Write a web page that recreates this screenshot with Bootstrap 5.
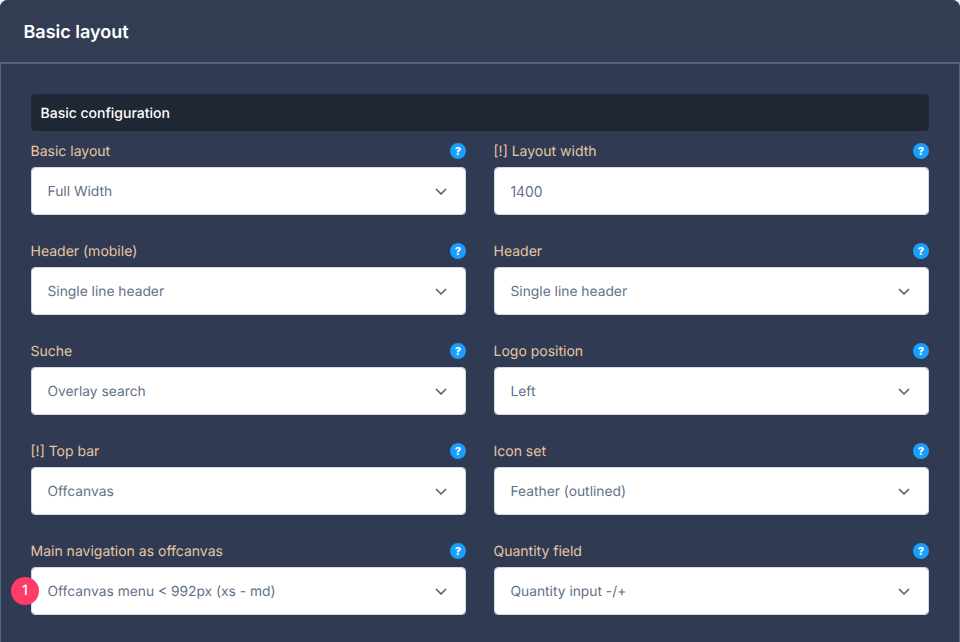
<!DOCTYPE html>
<html lang="en">
<head>
<meta charset="utf-8">
<title>Basic layout</title>
<link href="https://cdn.jsdelivr.net/npm/bootstrap@5.3.0/dist/css/bootstrap.min.css" rel="stylesheet">
<style>
html,body{height:100%;overflow:hidden}
body{background:#f0f2f5;font-family:Inter,"Liberation Sans",sans-serif;font-size:14px;text-rendering:geometricPrecision}
.cfg-card{background:#303b53;border:0;border-radius:8px 8px 0 0;height:642px;color:#fff}
.cfg-head{height:64px;padding:4px 24px 0 23.5px;background:#323d54;border-bottom:2px solid #4f657b;border-radius:8px 8px 0 0;display:flex;align-items:center}
.cfg-head h1{font-size:18px;font-weight:600;margin:0;color:#fff;line-height:1}
.cfg-body{padding:30px 30px 0;border-left:1px solid #4f657b;border-right:1px solid #4f657b;height:578px}
.cfg-section{background:#1f2634;height:37px;border-radius:4px;padding:1px 9.5px 0;display:flex;align-items:center;font-size:14px;font-weight:500;color:#fff;margin-bottom:11px}
.cfg-grid{--bs-gutter-x:28px;--bs-gutter-y:0}
.cfg-field{height:100px}
.cfg-top{height:25px;display:flex;justify-content:space-between;align-items:flex-start}
.cfg-label{color:#e6c6a2;font-size:14px;line-height:18px;margin:1px 0 0 -.5px}
.cfg-help{width:16px;height:16px;border-radius:50%;background:#189eff;color:#fff;font-size:11px;font-weight:800;line-height:16px;text-align:center;margin-top:1px}
.cfg-input{height:48px;border:1px solid #d1d9e0;border-radius:4px;padding:2px 16px 0;font-size:13.8px;color:#5f7287;background-color:#fff;box-shadow:none;text-indent:-.5px}
.cfg-select{position:relative}
.cfg-select .cfg-input{display:flex;align-items:center}
.cfg-caret{position:absolute;right:19px;top:21px;width:12px;height:8px}
.cfg-pin{position:absolute;left:-20px;top:10px;width:28px;height:28px;border-radius:50%;background:#ff3d68;color:#fff;font-size:14px;font-weight:500;line-height:28px;text-align:center}
</style>
</head>
<body>
<div class="card cfg-card">
  <div class="cfg-head"><h1>Basic layout</h1></div>
  <div class="cfg-body">
    <div class="cfg-section">Basic configuration</div>
    <div class="row cfg-grid">
      <div class="col-6 cfg-field"><div class="cfg-top"><label class="cfg-label">Basic layout</label><span class="cfg-help">?</span></div>
        <div class="cfg-select"><div class="form-control cfg-input">Full Width</div><svg class="cfg-caret" viewBox="0 0 12 8"><path d="M1.5 1.5 6 6l4.5-4.5" fill="none" stroke="#52667a" stroke-width="1.7" stroke-linecap="round" stroke-linejoin="round"/></svg></div></div>
      <div class="col-6 cfg-field"><div class="cfg-top"><label class="cfg-label">[!] Layout width</label><span class="cfg-help">?</span></div>
        <input class="form-control cfg-input" value="1400"></div>

      <div class="col-6 cfg-field"><div class="cfg-top"><label class="cfg-label">Header (mobile)</label><span class="cfg-help">?</span></div>
        <div class="cfg-select"><div class="form-control cfg-input">Single line header</div><svg class="cfg-caret" viewBox="0 0 12 8"><path d="M1.5 1.5 6 6l4.5-4.5" fill="none" stroke="#52667a" stroke-width="1.7" stroke-linecap="round" stroke-linejoin="round"/></svg></div></div>
      <div class="col-6 cfg-field"><div class="cfg-top"><label class="cfg-label">Header</label><span class="cfg-help">?</span></div>
        <div class="cfg-select"><div class="form-control cfg-input">Single line header</div><svg class="cfg-caret" viewBox="0 0 12 8"><path d="M1.5 1.5 6 6l4.5-4.5" fill="none" stroke="#52667a" stroke-width="1.7" stroke-linecap="round" stroke-linejoin="round"/></svg></div></div>

      <div class="col-6 cfg-field"><div class="cfg-top"><label class="cfg-label">Suche</label><span class="cfg-help">?</span></div>
        <div class="cfg-select"><div class="form-control cfg-input">Overlay search</div><svg class="cfg-caret" viewBox="0 0 12 8"><path d="M1.5 1.5 6 6l4.5-4.5" fill="none" stroke="#52667a" stroke-width="1.7" stroke-linecap="round" stroke-linejoin="round"/></svg></div></div>
      <div class="col-6 cfg-field"><div class="cfg-top"><label class="cfg-label">Logo position</label><span class="cfg-help">?</span></div>
        <div class="cfg-select"><div class="form-control cfg-input">Left</div><svg class="cfg-caret" viewBox="0 0 12 8"><path d="M1.5 1.5 6 6l4.5-4.5" fill="none" stroke="#52667a" stroke-width="1.7" stroke-linecap="round" stroke-linejoin="round"/></svg></div></div>

      <div class="col-6 cfg-field"><div class="cfg-top"><label class="cfg-label">[!] Top bar</label><span class="cfg-help">?</span></div>
        <div class="cfg-select"><div class="form-control cfg-input">Offcanvas</div><svg class="cfg-caret" viewBox="0 0 12 8"><path d="M1.5 1.5 6 6l4.5-4.5" fill="none" stroke="#52667a" stroke-width="1.7" stroke-linecap="round" stroke-linejoin="round"/></svg></div></div>
      <div class="col-6 cfg-field"><div class="cfg-top"><label class="cfg-label">Icon set</label><span class="cfg-help">?</span></div>
        <div class="cfg-select"><div class="form-control cfg-input">Feather (outlined)</div><svg class="cfg-caret" viewBox="0 0 12 8"><path d="M1.5 1.5 6 6l4.5-4.5" fill="none" stroke="#52667a" stroke-width="1.7" stroke-linecap="round" stroke-linejoin="round"/></svg></div></div>

      <div class="col-6 cfg-field"><div class="cfg-top"><label class="cfg-label">Main navigation as offcanvas</label><span class="cfg-help">?</span></div>
        <div class="cfg-select"><div class="form-control cfg-input">Offcanvas menu &lt; 992px (xs - md)</div><svg class="cfg-caret" viewBox="0 0 12 8"><path d="M1.5 1.5 6 6l4.5-4.5" fill="none" stroke="#52667a" stroke-width="1.7" stroke-linecap="round" stroke-linejoin="round"/></svg><span class="cfg-pin">1</span></div></div>
      <div class="col-6 cfg-field"><div class="cfg-top"><label class="cfg-label">Quantity field</label><span class="cfg-help">?</span></div>
        <div class="cfg-select"><div class="form-control cfg-input">Quantity input -/+</div><svg class="cfg-caret" viewBox="0 0 12 8"><path d="M1.5 1.5 6 6l4.5-4.5" fill="none" stroke="#52667a" stroke-width="1.7" stroke-linecap="round" stroke-linejoin="round"/></svg></div></div>
    </div>
  </div>
</div>
</body>
</html>
